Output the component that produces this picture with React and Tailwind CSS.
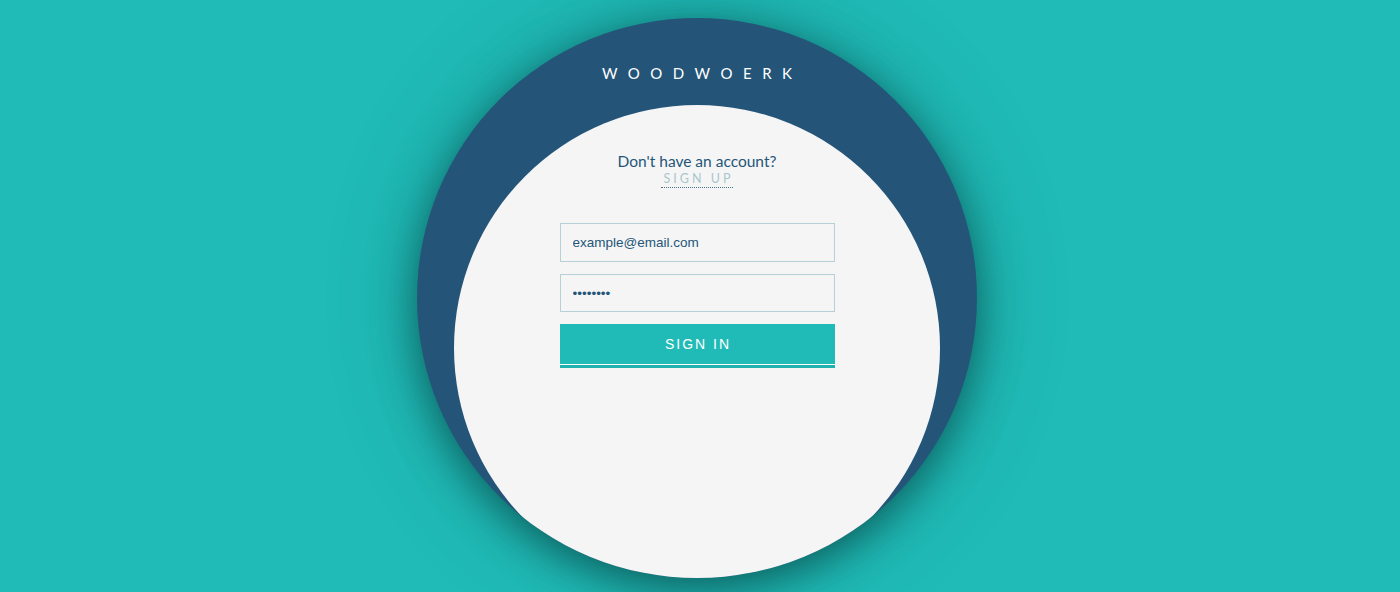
import { useState } from "react";

const App = () => {
  const [email, setEmail] = useState("example@email.com");
  const [password, setPassword] = useState("12345678");

  return (
    <div className="flex h-[592px] w-full justify-center overflow-hidden bg-[#20bbb7] pr-[6px] pt-[18px]">
      <div className="flex h-[560px] w-[560px] shrink-0 flex-col items-center overflow-hidden rounded-full bg-[#245579] shadow-[0_10px_40px_rgba(0,40,40,0.55),0_0_90px_rgba(0,60,60,0.25)]">
        <h1 className="mt-[46px] pl-[10.5px] text-[15px] font-normal leading-[18px] tracking-[10.5px] text-white [font-family:Lato,'Open_Sans',sans-serif]">
          WOODWOERK
        </h1>

        <div className="mt-[23px] flex h-[486px] w-[486px] shrink-0 flex-col items-center rounded-full bg-[#f5f5f5] pt-[47px]">
          <p className="text-[15.5px] leading-[18px] text-[#245579] [font-family:Lato,sans-serif]">
            Don't have an account?
          </p>
          <a
            href="#"
            className="mt-[1px] border-b border-dotted border-[#46708a] pl-[3px] text-[12.5px] leading-[16px] tracking-[3px] text-[#a9c7cc] [font-family:Lato,sans-serif]"
          >
            SIGN UP
          </a>

          <form
            onSubmit={(e) => e.preventDefault()}
            className="mt-[35px] flex w-[275px] flex-col gap-[12px] [font-family:'Liberation_Sans',Arial,sans-serif]"
          >
            <input
              type="text"
              value={email}
              onChange={(e) => setEmail(e.target.value)}
              className="h-[39px] w-full border border-[#b5d1d5] bg-[#f5f5f5] px-[12px] text-[13.5px] text-[#245579] outline-none"
            />
            <input
              type="password"
              value={password}
              onChange={(e) => setPassword(e.target.value)}
              className="h-[38px] w-full border border-[#b5d1d5] bg-[#f5f5f5] px-[12px] text-[13.5px] text-[#245579] outline-none"
            />
            <button
              type="submit"
              className="h-[40px] w-full bg-[#20bbb7] pl-[2px] text-[14px] tracking-[2px] text-white shadow-[0_1px_0_#ffffff,0_4px_0_#22b2ae]"
            >
              SIGN IN
            </button>
          </form>
        </div>
      </div>
    </div>
  );
};

export default App;
